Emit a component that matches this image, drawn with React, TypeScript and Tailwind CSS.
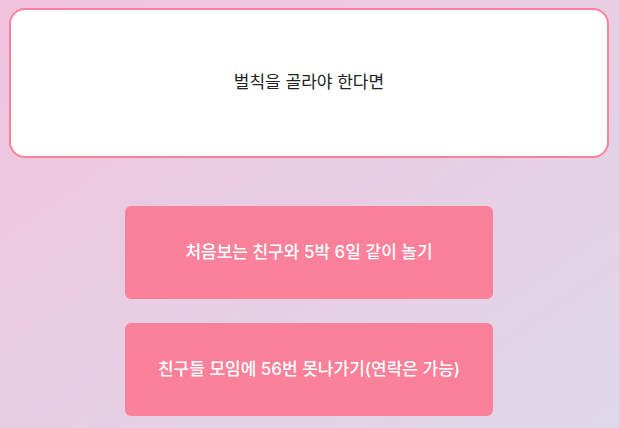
import React from 'react';

const options = [
  '처음보는 친구와 5박 6일 같이 놀기',
  '친구들 모임에 56번 못나가기(연락은 가능)',
];

export default function App() {
  return (
    <div
      className="min-h-screen w-full bg-gradient-to-br from-[#f1c3dc] to-[#ded8ea] pl-[9px] pt-2"
      style={{ fontFamily: 'Inter, "Noto Sans CJK KR", sans-serif' }}
    >
      <div className="w-[600px] flex flex-col items-center">
        {/* Question card */}
        <div className="w-full h-[150px] bg-white border-2 border-[#fb809a] rounded-2xl flex items-center justify-center">
          <p className="text-[17px] text-[#222]">벌칙을 골라야 한다면</p>
        </div>

        {/* Choices */}
        <div className="mt-12 flex flex-col gap-6">
          {options.map((label) => (
            <button
              key={label}
              className="w-[368px] h-[93px] rounded-md bg-[#fb809a] text-white text-[17px] font-medium flex items-center justify-center"
            >
              {label}
            </button>
          ))}
        </div>
      </div>
    </div>
  );
}
